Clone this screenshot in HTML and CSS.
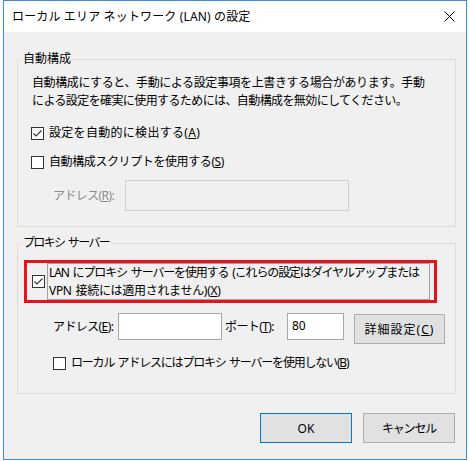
FILE: index.html
```html
<!DOCTYPE html>
<html lang="ja">
<head>
<meta charset="utf-8">
<title>ローカル エリア ネットワーク (LAN) の設定</title>
<link rel="stylesheet" href="styles.css">
</head>
<body>
<div class="window">
  <div class="titlebar">
    <span class="title">ローカル エリア ネットワーク (LAN) の設定</span>
    <svg class="close" width="11" height="11" viewBox="0 0 11 11"><path d="M0.5 0.5 L10.5 10.5 M10.5 0.5 L0.5 10.5" stroke="#000" stroke-width="1" fill="none"/></svg>
  </div>
  <div class="content">
    <div class="group g1">
      <span class="legend">自動構成</span>
      <p class="desc"><span class="line desc-1">自動構成にすると、手動による設定事項を上書きする場合があります。手動</span><span class="line desc-2">による設定を確実に使用するためには、自動構成を無効にしてください。</span></p>
      <div class="check row-a"><span class="box"><svg width="11" height="11" viewBox="0 0 11 11"><path d="M1.5 5.5 L4 8 L9.5 2.5" stroke="#333" stroke-width="1.1" fill="none"/></svg></span><span class="ctext">設定を自動的に検出する(<u>A</u>)</span></div>
      <div class="check row-s"><span class="box"></span><span class="ctext">自動構成スクリプトを使用する(<u>S</u>)</span></div>
      <div class="addr-row">
        <span class="lbl dis-lbl">アドレス(<u>R</u>):</span>
        <span class="input input-dis"></span>
      </div>
    </div>
    <div class="group g2">
      <span class="legend legend-proxy">プロキシ サーバー</span>
      <div class="highlight">
        <span class="box"><svg width="11" height="11" viewBox="0 0 11 11"><path d="M1.5 5.5 L4 8 L9.5 2.5" stroke="#333" stroke-width="1.1" fill="none"/></svg></span>
        <span class="focus"><span class="line focus-1">LAN にプロキシ サーバーを使用する (これらの設定はダイヤルアップまたは</span><span class="line focus-2">VPN 接続には適用されません)(<u>X</u>)</span></span>
      </div>
      <div class="proxy-row">
        <span class="lbl lbl-addr">アドレス(<u>E</u>):</span>
        <span class="input input-addr"></span>
        <span class="lbl lbl-port">ポート(<u>T</u>):</span>
        <span class="input input-port">80</span>
        <span class="btn btn-adv">詳細設定(<u>C</u>)</span>
      </div>
      <div class="check row-b"><span class="box"></span><span class="ctext">ローカル アドレスにはプロキシ サーバーを使用しない(<u>B</u>)</span></div>
    </div>
    <div class="buttons">
      <span class="btn btn-ok">OK</span>
      <span class="btn btn-cancel">キャンセル</span>
    </div>
  </div>
</div>
</body>
</html>
```
FILE: styles.css
```css
* { box-sizing: border-box; }
html, body { margin: 0; padding: 0; background: #fff; }
body {
  font-family: "Noto Sans", "Noto Sans CJK JP", sans-serif;
  font-size: 12px;
  color: #000;
}
u { text-decoration: underline; text-underline-offset: 1px; }

.window {
  margin-left: 3px;
  width: 464px;
  height: 460px;
  border: 1px solid #3b8ed9;
  background: #f0f0f0;
  display: flex;
  flex-direction: column;
}
.titlebar {
  height: 31px;
  flex: none;
  background: #fff;
  display: flex;
  align-items: center;
  justify-content: space-between;
  padding: 0 11px 0 8px;
}
.title { line-height: 18px; white-space: nowrap; letter-spacing: 0.15px; }
.close { display: block; }

.content { padding: 0 10px 0 13px; }

.group {
  position: relative;
  border: 1px solid #dcdcdc;
}
.legend {
  position: absolute;
  left: 3px;
  top: -10px;
  padding: 0 2px;
  line-height: 18px;
  background: #f0f0f0;
  white-space: nowrap;
}
.legend-proxy { letter-spacing: -1.65px; word-spacing: 2px; }
.g1 { margin-top: 27px; padding: 14px 0 15px 0; }
.g2 { margin-top: 16px; padding: 16px 0 21px 0; }

.line { display: block; white-space: nowrap; }
.desc {
  margin: 0 0 0 14px;
  line-height: 18px;
}
.desc-1 { letter-spacing: -0.4px; }
.desc-2 { letter-spacing: -0.6px; }

.check {
  display: flex;
  align-items: center;
  height: 18px;
  white-space: nowrap;
}
.row-a { margin: 14px 0 0 13px; letter-spacing: 0.3px; }
.row-s { margin: 11px 0 0 13px; letter-spacing: -0.4px; }
.row-b { margin: 10px 0 0 35px; letter-spacing: -1.2px; word-spacing: 1.5px; }
.box {
  width: 13px;
  height: 13px;
  flex: none;
  border: 1px solid #333;
  background: #fff;
  display: flex;
  align-items: center;
  justify-content: center;
}
.box svg { display: block; }
.ctext { margin-left: 5px; line-height: 18px; }

.addr-row {
  display: flex;
  align-items: center;
  margin: 9px 0 0 35px;
  height: 31px;
}
.lbl { white-space: nowrap; line-height: 18px; letter-spacing: -0.6px; }
.dis-lbl { width: 72px; color: #8c8c8c; }
.input {
  display: block;
  height: 27px;
  background: #fff;
  border: 1px solid #a8a8a8;
}
.input-dis {
  width: 224px;
  height: 31px;
  background: #f0f0f0;
  border-color: #d0d0d0;
}

.highlight {
  margin-left: 6px;
  width: 413px;
  height: 43px;
  border: 3px solid #e8121c;
  display: flex;
  align-items: center;
  padding-left: 5px;
}
.focus {
  margin-left: 2px;
  width: 383px;
  height: 37px;
  align-self: flex-start;
  border: 1px solid #a0a0a0;
  padding: 0 0 0 1px;
  line-height: 17.5px;
}
.focus-1 { letter-spacing: -1.15px; word-spacing: 2px; }
.focus-2 { letter-spacing: -0.3px; word-spacing: 1px; }

.proxy-row {
  display: flex;
  align-items: flex-start;
  margin: 10px 0 0 35px;
  height: 31px;
}
.lbl-addr { width: 65px; margin-top: 5px; }
.input-addr { width: 104px; }
.lbl-port { width: 62px; margin-left: 3px; margin-top: 5px; }
.input-port { width: 57px; padding: 3px 0 0 4px; line-height: 18px; }

.btn {
  display: flex;
  align-items: center;
  justify-content: center;
  height: 30px;
  background: #e1e1e1;
  border: 1px solid #adadad;
  white-space: nowrap;
}
.btn-adv { width: 91px; margin: 1px 0 0 10px; letter-spacing: 1px; }

.buttons {
  display: flex;
  justify-content: flex-end;
  gap: 11px;
  margin: 19px 1px 0 0;
}
.btn-ok, .btn-cancel { width: 92px; }
.btn-ok { border-color: #0078d7; }
.btn-cancel { letter-spacing: -1.2px; }
```
